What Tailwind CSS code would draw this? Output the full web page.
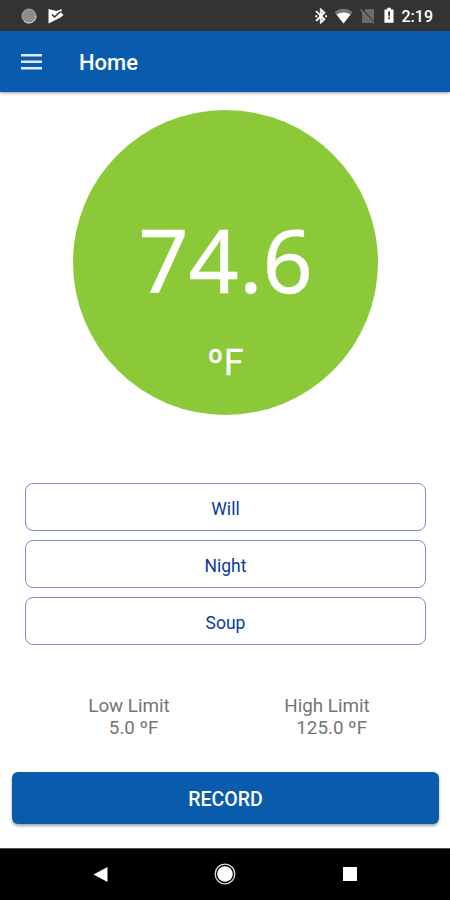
<!DOCTYPE html>
<html lang="en">
<head>
    <meta charset="UTF-8">
    <meta name="viewport" content="width=device-width, initial-scale=1.0">
    <title>Home</title>
    <script src="https://cdn.jsdelivr.net/npm/@tailwindcss/browser@4"></script>
</head>
<body class="bg-white font-['Roboto',sans-serif]">
    <div class="flex flex-col w-[450px] h-[900px] overflow-hidden">
        <!-- Status bar -->
        <div class="flex items-center h-[31px] shrink-0 bg-[#333333] pl-[21px] pr-[17px] text-white">
            <svg class="w-4 h-4" viewBox="0 0 16 16">
                <circle cx="8" cy="8" r="7" fill="#8c8c8c" stroke="#a8a8a8" stroke-width="1"/>
                <path d="M3 13.2A7.2 7.2 0 0 0 15 8" fill="none" stroke="#d0d0d0" stroke-width="1"/>
            </svg>
            <svg class="w-4 h-4 ml-[11px]" viewBox="0 0 16 16">
                <path d="M.5 1l8 2L14 1l-1 3.500 2.500 2.500-3 2.500L.5 15.500z" fill="#fff"/>
                <path d="M4 6.500l2.500 2.500L12.500 3.500" fill="none" stroke="#333" stroke-width="1.600"/>
            </svg>
            <div class="flex items-center ml-auto">
                <svg class="w-[18px] h-[18px] mr-1" viewBox="0 0 24 24" fill="#fff" stroke="#fff" stroke-width=".8">
                    <path d="M17.71 7.71L12 2h-1v7.59L6.41 5 5 6.41 10.59 12 5 17.59 6.41 19 11 14.41V22h1l5.71-5.71-4.3-4.29 4.3-4.29zM13 5.83l1.88 1.88L13 9.59V5.83zm1.88 10.46L13 18.17v-3.76l1.88 1.88z"/>
                    <path d="M4.500 11h2.500v2.500H4.500zM17.500 11H20v2.500h-2.500z" stroke="none"/>
                </svg>
                <svg class="w-[19px] h-[16px] mr-[7px]" viewBox="0 0 19 16">
                    <path d="M.5 4.200C6-.3 13-.3 18.500 4.200L9.500 15.500z" fill="#777"/>
                    <path d="M2.500 6.500C7 3.700 12 3.700 16.500 6.500L9.500 15.500z" fill="#fff"/>
                </svg>
                <svg class="w-[15px] h-[16px] mr-[9px]" viewBox="0 0 15 16">
                    <path d="M6 1h8v14H2V5z" fill="#6b6b6b"/>
                    <path d="M1.500 1l13 14.500" stroke="#333" stroke-width="2.200"/>
                    <path d="M.5 1.500l13.500 14" stroke="#777" stroke-width="1.300"/>
                </svg>
                <svg class="w-[10px] h-[17px] mr-[8px]" viewBox="0 0 11 17">
                    <path d="M3.500 0h4v2H10.500v14.500H.5V2h3z" fill="#fff"/>
                    <path d="M4.500 4h2.200l-.3 5.500H4.800zM4.600 10.700h2v1.900h-2z" fill="#333"/>
                </svg>
                <span class="text-[16px] leading-none font-medium pt-[2px]">2:19</span>
            </div>
        </div>

        <!-- App bar -->
        <div class="flex items-center h-[61px] shrink-0 bg-[#095cad] pl-[21px] text-white shadow-[0_1px_3px_rgba(0,0,0,0.4)]">
            <svg class="w-[21px] h-4" viewBox="0 0 21 16" fill="#dfe9ff">
                <rect y="0" width="21" height="2.500"/>
                <rect y="6.500" width="21" height="2.500"/>
                <rect y="13" width="21" height="2.500"/>
            </svg>
            <h1 class="ml-[37px] pt-[2px] text-[22px] font-medium">Home</h1>
        </div>

        <div class="flex flex-col flex-1 pt-[18px]">
            <!-- Reading -->
            <div class="flex flex-col items-center w-[305px] h-[305px] ml-[73px] shrink-0 rounded-full bg-[#8cc939] text-white pt-[94px]">
                <span class="font-['Noto_Sans',sans-serif] text-[88px] leading-[110px] [-webkit-text-stroke:0.4px_white]">74.6</span>
                <span class="text-[36px] leading-[40px] mt-[29px] [-webkit-text-stroke:0.3px_white]">ºF</span>
            </div>

            <!-- Profiles -->
            <div class="flex flex-col gap-[9px] mt-[68px] pl-[25px] pr-[24px] text-[17.5px] text-[#0a3a9c]">
                <button class="h-[48px] pt-[4px] rounded-lg border border-[#7f8ec4]">Will</button>
                <button class="h-[48px] pt-[4px] rounded-lg border border-[#7f8ec4]">Night</button>
                <button class="h-[48px] pt-[4px] rounded-lg border border-[#7f8ec4]">Soup</button>
            </div>

            <!-- Limits -->
            <div class="grid grid-cols-2 mt-[50px] pl-[30px] pr-[24px] text-center text-[18.8px] leading-[22px] text-[#757575]">
                <div>
                    <p>Low Limit</p>
                    <p class="whitespace-pre">  5.0 ºF</p>
                </div>
                <div>
                    <p>High Limit</p>
                    <p class="whitespace-pre">  125.0 ºF</p>
                </div>
            </div>

            <button class="h-[52px] mt-[33px] ml-[12px] mr-[11px] pt-[3px] rounded-md bg-[#095cad] text-white text-[19.5px] font-medium shadow-[0_2px_3px_rgba(0,0,0,0.35)]">RECORD</button>
        </div>

        <!-- Navigation bar -->
        <div class="flex items-center justify-between h-[52px] shrink-0 bg-black border-t border-[#555] px-[93px] pb-px">
            <svg class="w-[15px] h-[15px]" viewBox="0 0 15 15" fill="#fff"><path d="M14.500 0v15L.5 7.500z"/></svg>
            <svg class="w-[22px] h-[22px] -ml-px" viewBox="0 0 22 22">
                <circle cx="11" cy="11" r="9.800" fill="none" stroke="#ddd" stroke-width="1.300"/>
                <circle cx="11" cy="11" r="7.800" fill="#fff"/>
            </svg>
            <svg class="w-[14px] h-[14px]" viewBox="0 0 14 14" fill="#fff"><rect width="14" height="14"/></svg>
        </div>
    </div>
</body>
</html>
